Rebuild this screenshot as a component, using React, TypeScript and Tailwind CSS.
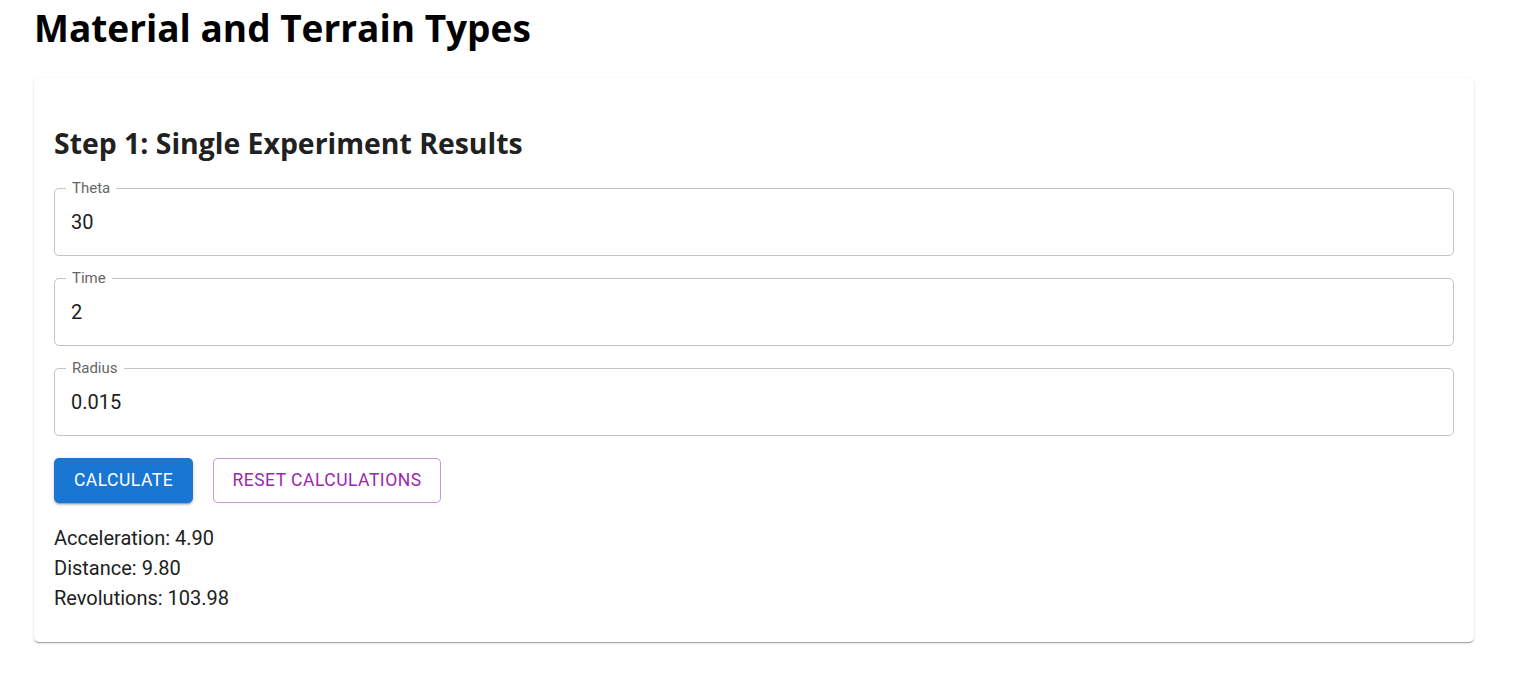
import React from "react";

const fields = [
  { label: "Theta", value: "30" },
  { label: "Time", value: "2" },
  { label: "Radius", value: "0.015" },
];

export default function App() {
  return (
    <div className="bg-white min-h-[682px] px-[34px] pt-[5px] text-[#212121]" style={{ fontFamily: "Roboto, 'Liberation Sans', sans-serif" }}>
      <h1 className="text-[37px] leading-[46px] font-bold text-black" style={{ fontFamily: "'Open Sans', 'Noto Sans', sans-serif" }}>
        Material and Terrain Types
      </h1>
      <div className="mt-[27px] w-[1440px] rounded-[5px] bg-white px-[20px] pt-[20px] pb-[29px] shadow-[0px_2px_1px_-1px_rgba(0,0,0,0.2),0px_1px_1px_0px_rgba(0,0,0,0.14),0px_1px_3px_0px_rgba(0,0,0,0.12)]">
        <h2 className="mt-[28px] text-[28.4px] leading-[35px] font-bold text-[#212121]" style={{ fontFamily: "'Open Sans', 'Noto Sans', sans-serif" }}>
          Step 1: Single Experiment Results
        </h2>
        <div className="mt-[27px] flex flex-col gap-[22px]">
          {fields.map((f) => (
            <div key={f.label} className="relative h-[68px] rounded-[5px] border border-[#c4c4c4] flex items-center pl-[16px]">
              <span className="absolute left-[11px] top-[-10px] bg-white px-[6px] text-[15px] leading-[18px] text-[#666666]">
                {f.label}
              </span>
              <span className="text-[20px] leading-[24px] text-[#212121]">{f.value}</span>
            </div>
          ))}
        </div>
        <div className="mt-[22px] flex gap-[20px]">
          <button className="h-[45px] w-[139px] rounded-[5px] bg-[#1976d2] text-[17.5px] font-normal uppercase tracking-[0.5px] text-white shadow-[0px_3px_1px_-2px_rgba(0,0,0,0.2),0px_2px_2px_0px_rgba(0,0,0,0.14),0px_1px_5px_0px_rgba(0,0,0,0.12)]">
            Calculate
          </button>
          <button className="h-[45px] w-[228px] rounded-[5px] border border-[rgba(156,39,176,0.5)] bg-white text-[17.5px] font-normal uppercase tracking-[0.5px] text-[#9c27b0]">
            Reset Calculations
          </button>
        </div>
        <div className="mt-[20px] text-[20px] leading-[30px] text-[#212121]">
          <p>Acceleration: 4.90</p>
          <p>Distance: 9.80</p>
          <p>Revolutions: 103.98</p>
        </div>
      </div>
    </div>
  );
}
